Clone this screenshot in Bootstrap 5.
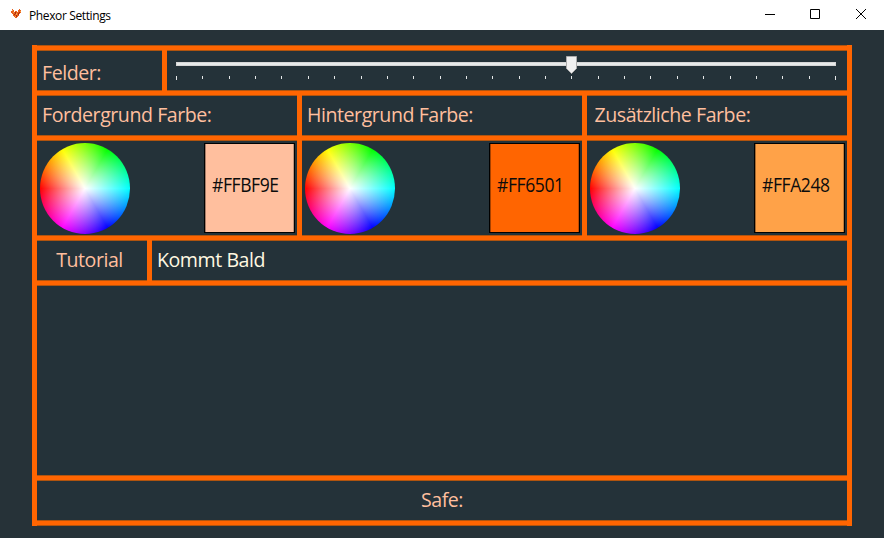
<!DOCTYPE html>
<html lang="de">
<head>
<meta charset="utf-8">
<title>Phexor Settings</title>
<link href="https://cdn.jsdelivr.net/npm/bootstrap@5.3.0/dist/css/bootstrap.min.css" rel="stylesheet">
<style>
body{background:#263238;font-family:"Open Sans","Noto Sans",sans-serif;height:538px;overflow:hidden;color:#ffbf9e}
.titlebar{height:30px;background:#fff;color:#000;font-size:12px;letter-spacing:-.38px}
.titlebar .window-title{margin-left:5px;padding-top:1px}
.titlebar .caption-btn{width:46px;height:30px;display:block}
.frame{margin:15px 32px 0;background:#243239;border:solid #ff6501;border-width:0 5px}
.rule{height:6px;background:#ff6501;border:solid #b0540f;border-width:1px 0}
.line{height:39px}
.line-wheel{height:94px}
.line-body{height:189px}
.bar{border-right:5px solid #ff6501;margin:-1px 0;z-index:1}
.label{font-size:19.6px;line-height:27px;white-space:nowrap;letter-spacing:-.46px}
.pad{padding:5px 0 0 5px}
.bar.pad{padding-top:6px}
.bar.pad-field{padding:9px 0 0 5px}
.pad-extra{padding:5px 0 0 7.500px}
.bar.pad-tut{padding:6px 5px 0 0}
.w-field{width:130px}
.w-first{width:265px}
.w-mid{width:285px}
.w-tut{width:115px}
.picker{padding:2px 2px 0 3px}
.bar.picker{padding-top:3px}
.wheel{width:90px;height:91px;border-radius:50%;background:radial-gradient(closest-side,#fff,rgba(255,255,255,0)),conic-gradient(from 270deg,#f00,#ff0,#0f0,#0ff,#00f,#f0f,#f00)}
.swatch{width:91px;height:90px;border:1px solid #000;box-shadow:inset 1px 0 rgba(0,0,0,.35),inset -1px 0 rgba(0,0,0,.25);color:#0c0c0c;padding:27px 0 0 7px}
.hex{display:inline-block;transform:scaleX(.895);transform-origin:left}
.cream{color:#fff8e1}
</style>
<script src="https://cdn.jsdelivr.net/npm/bootstrap@5.3.0/dist/js/bootstrap.bundle.min.js"></script>
</head>
<body>
<header class="titlebar d-flex align-items-center">
<svg class="ms-2" width="16" height="16" viewBox="0 0 16 16" shape-rendering="crispEdges"><path d="M4 2h1v1h1v2h1v-1h2v1h1v-2h1v-1h1v1h1v3h-1v1h-1v2h-1v1h-1v1h-2v-1h-1v-1h-1v-2h-1v-1h-1z" fill="#e8601b"/><path d="M7 5h1v2h-1zM6 7h1v1h-1zM8 8h1v2h-1zM10 6h1v2h-1zM11 5h1v1h-1z" fill="#a82c10"/><path d="M4 3h1v1h-1zM12 4h1v1h-1zM8 6h1v2h-1zM5 5h1v1h-1zM7 9h1v1h-1z" fill="#f6a04a"/></svg>
<span class="window-title me-auto">Phexor Settings</span>
<svg class="caption-btn" viewBox="0 0 46 30"><path d="M19 14.500h10" stroke="#000"/></svg>
<svg class="caption-btn" viewBox="0 0 46 30"><path d="M18.500 9.500h9v9h-9z" fill="none" stroke="#000"/></svg>
<svg class="caption-btn" viewBox="0 0 46 30"><path d="M18 9l10 10M28 9l-10 10" stroke="#000"/></svg>
</header>
<main class="frame">
<div class="rule"></div>
<div class="line d-flex">
<div class="bar w-field label pad-field">Felder:</div>
<svg width="680" height="39" viewBox="167 51 680 39" shape-rendering="crispEdges">
<path d="M176 62h660v4h-660z" fill="#d6d6d6"/><path d="M177 63h658v2h-658z" fill="#e7eaea"/>
<path d="M176.500 76v4M835.500 76v4M202.500 76v3M229.500 76v3M255.500 76v3M281.500 76v3M308.500 76v3M334.500 76v3M361.500 76v3M387.500 76v3M413.500 76v3M440.500 76v3M466.500 76v3M492.500 76v3M519.500 76v3M545.500 76v3M571.500 76v3M598.500 76v3M624.500 76v3M650.500 76v3M677.500 76v3M703.500 76v3M730.500 76v3M756.500 76v3M782.500 76v3M809.500 76v3" stroke="#e5e8e8"/>
<path d="M566.500 56.500h10v12l-5 5-5-5z" fill="#f0f0f0" stroke="#acacac" shape-rendering="auto"/>
</svg>
</div>
<div class="rule"></div>
<div class="line d-flex">
<div class="bar w-first label pad">Fordergrund Farbe:</div>
<div class="bar w-mid label pad">Hintergrund Farbe:</div>
<div class="label pad-extra">Zusätzliche Farbe:</div>
</div>
<div class="rule"></div>
<div class="line-wheel d-flex">
<div class="bar picker w-first d-flex justify-content-between"><div class="wheel"></div><div class="swatch label" style="background:#ffbf9e"><span class="hex">#FFBF9E</span></div></div>
<div class="bar picker w-mid d-flex justify-content-between"><div class="wheel"></div><div class="swatch label" style="background:#ff6501"><span class="hex">#FF6501</span></div></div>
<div class="picker d-flex justify-content-between flex-fill"><div class="wheel"></div><div class="swatch label" style="background:#ffa248"><span class="hex">#FFA248</span></div></div>
</div>
<div class="rule"></div>
<div class="line d-flex">
<div class="bar w-tut label text-center pad-tut">Tutorial</div>
<div class="label cream pad">Kommt Bald</div>
</div>
<div class="rule"></div>
<div class="line-body"></div>
<div class="rule"></div>
<div class="line label text-center pad ps-0">Safe:</div>
<div class="rule"></div>
</main>
</body>
</html>
